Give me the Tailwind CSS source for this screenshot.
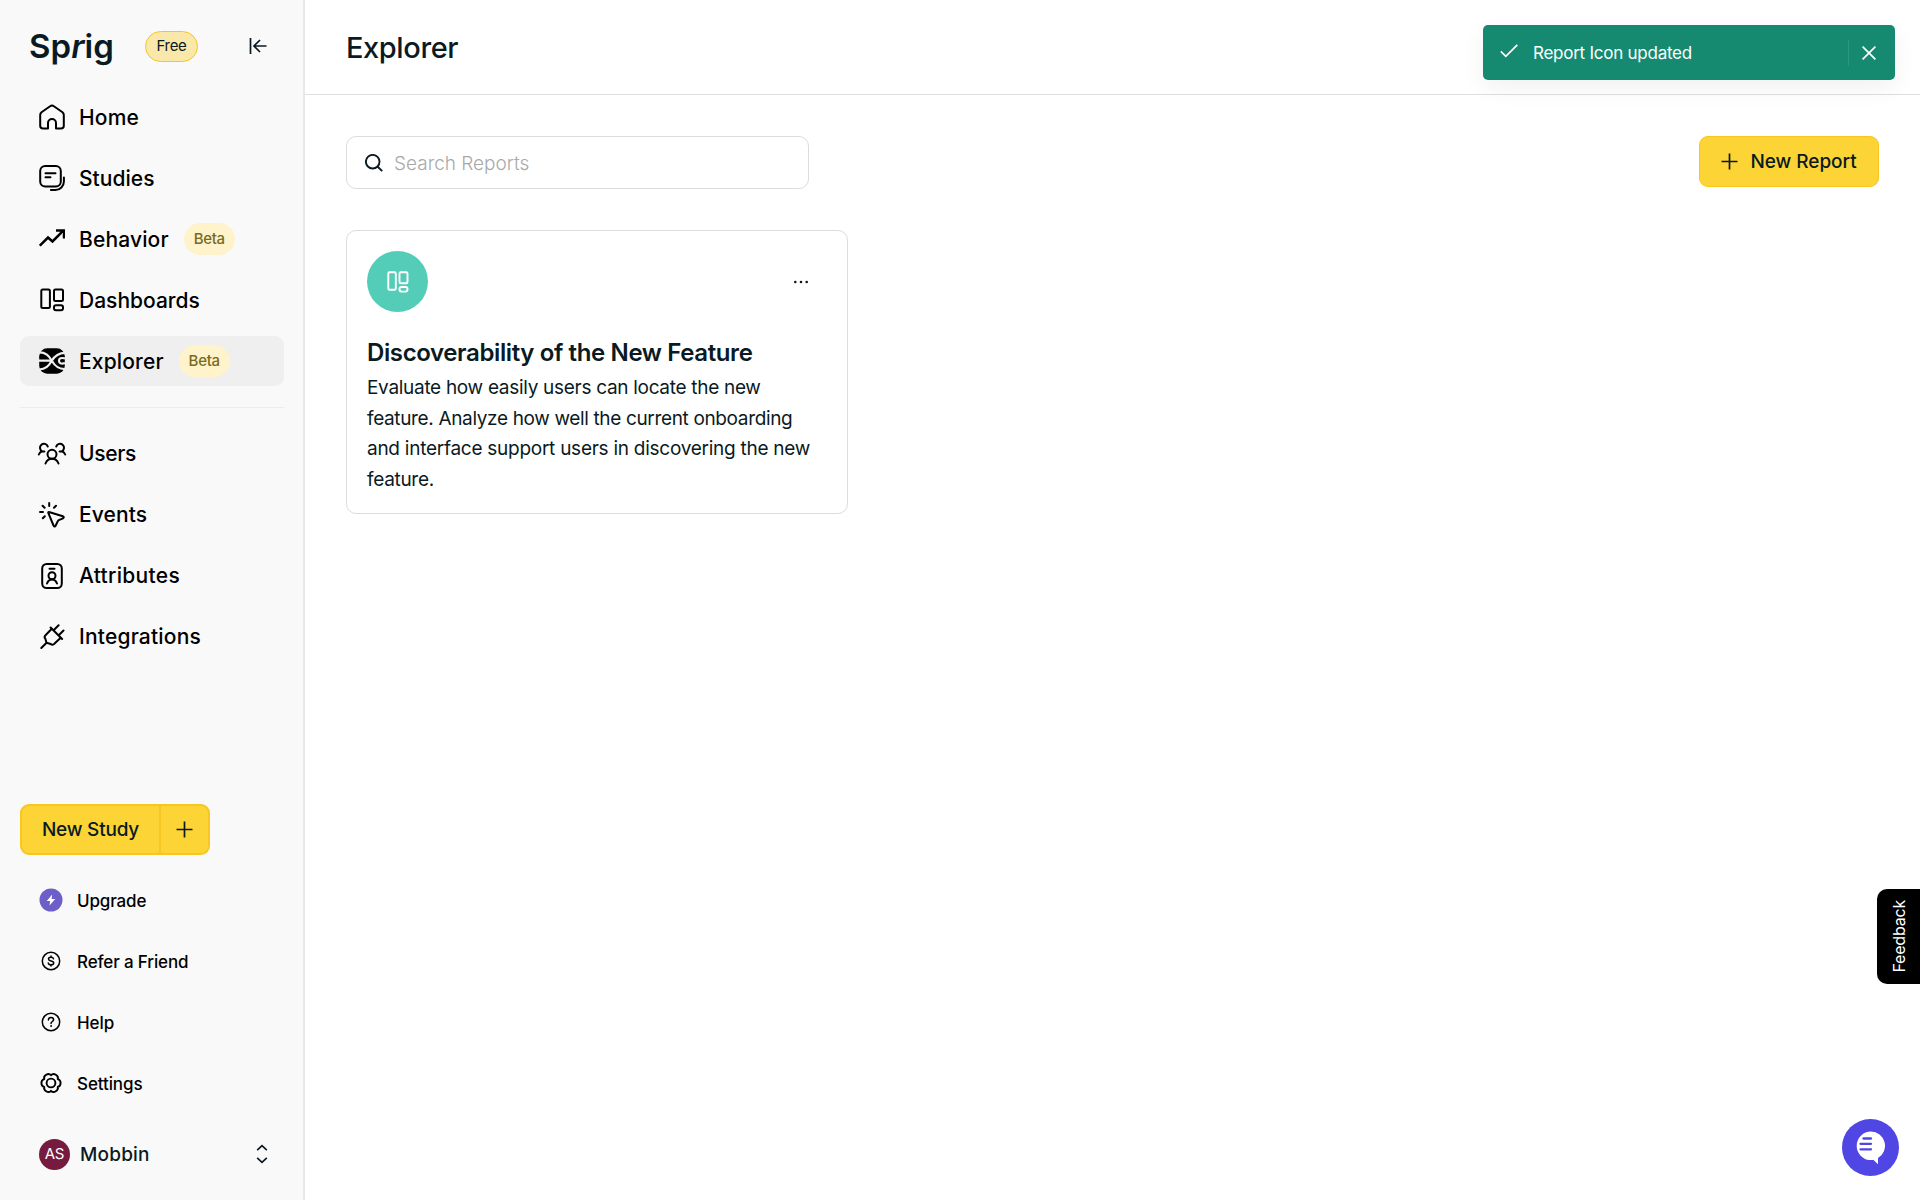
<!DOCTYPE html>
<html lang="en">
<head>
    <meta charset="utf-8">
    <title>Explorer | Sprig</title>
    <script src="https://cdn.jsdelivr.net/npm/@tailwindcss/browser@4"></script>
</head>
<body class="h-screen overflow-hidden bg-white font-['Inter','Liberation_Sans',sans-serif] text-[#0a1a22]">
    <div class="flex h-full">
        <!-- Sidebar -->
        <aside class="flex flex-col w-[305px] h-full shrink-0 bg-[#f9f9f9] border-r-2 border-[#e8e8e8] pl-5 pr-[19px] text-black">
            <div class="flex items-center h-[92px] pl-[9px] pr-[17px] text-[#0a1a22]">
                <h1 class="w-[87px] text-[33px] font-semibold leading-none tracking-[0.1px]">Sp<i>r</i>ig</h1>
                <span class="flex items-center justify-center ml-[29px] w-[53px] h-[31px] pt-px rounded-full border-[1.5px] border-[#f8c623] bg-[#f9e8a9] text-[15px] tracking-[-0.3px]">Free</span>
                <svg class="ml-auto" width="18" height="18" viewBox="0 0 18 18" fill="none" stroke="currentColor" stroke-width="1.7">
                    <path d="M1.5 1v16M17.5 9H5.5M11 3 5 9l6 6"/>
                </svg>
            </div>

            <nav class="flex flex-col gap-[11px] text-[21px] font-medium">
                <a class="flex items-center h-[50px] px-[19px] gap-[14px] rounded-[9px]">
                    <svg width="26" height="26" viewBox="0 0 26 26" fill="none" stroke="currentColor" stroke-width="2" stroke-linejoin="round">
                        <path d="M9 24.5H4a2.8 2.8 0 0 1-2.8-2.8V11c0-1.2.5-2.1 1.3-2.8l8.6-6a3.2 3.2 0 0 1 3.8 0l8.6 6c.8.7 1.3 1.6 1.3 2.8v10.7a2.8 2.8 0 0 1-2.8 2.8h-5V19a4 4 0 0 0-8 0z"/>
                    </svg>
                    <span class="pt-0.5 tracking-[0.2px]">Home</span>
                </a>
                <a class="flex items-center h-[50px] px-[19px] gap-[14px] rounded-[9px]">
                    <svg width="26" height="26" viewBox="0 0 26 26" fill="none" stroke="currentColor" stroke-width="2" stroke-linecap="round">
                        <rect x="1.2" y="1" width="20.6" height="20.4" rx="5"/>
                        <path d="M6.5 8.2h10M6.5 12.2h5M24.9 12.5v4a8.4 8.4 0 0 1-8.4 8.4h-4.6"/>
                    </svg>
                    <span class="pt-0.5 tracking-[0.05px]">Studies</span>
                </a>
                <a class="flex items-center h-[50px] px-[19px] gap-[14px] rounded-[9px]">
                    <svg width="26" height="26" viewBox="0 0 26 26" fill="none" stroke="currentColor" stroke-width="2.5">
                        <path d="M.8 19.7 9 11.5l4.5 4L24.3 4.7M17 4.5h8v8"/>
                    </svg>
                    <span class="pt-0.5 tracking-[0.15px]">Behavior</span>
                    <span class="flex items-center justify-center ml-[1px] w-[51px] h-[32px] pt-px rounded-full bg-[#fef3cb] text-[#7a6a1c] text-[15px] tracking-[-0.3px]">Beta</span>
                </a>
                <a class="flex items-center h-[50px] px-[19px] gap-[14px] rounded-[9px]">
                    <svg width="26" height="26" viewBox="0 0 26 26" fill="none" stroke="currentColor" stroke-width="2">
                        <rect x="2.3" y="2.4" width="8.6" height="18.6" rx="1.5"/>
                        <rect x="15" y="2.4" width="9" height="11.6" rx="1.5"/>
                        <rect x="15" y="18.2" width="9" height="5" rx="2"/>
                    </svg>
                    <span class="pt-0.5 tracking-[0px]">Dashboards</span>
                </a>
                <a class="flex items-center h-[50px] px-[19px] gap-[14px] rounded-[9px] bg-[#efefef]">
                    <svg width="26" height="26" viewBox="0 0 26 26" fill="none">
                        <rect x=".2" y=".3" width="25.6" height="25.4" rx="8" fill="#000"/>
                        <path d="M-1 4.5C7 4 10 8 12.8 12.7S19 21.5 27 21M-1 21.5C7 21.5 10 17.5 12.8 12.7S19.5 4.5 27 4.8M0 12.7h12.500M26 10.500c-4-1.300-6 0-6 2.300s2 3.500 6 2.200" stroke="#efefef" stroke-width="2.2"/>
                    </svg>
                    <span class="pt-0.5 tracking-[0.15px]">Explorer</span>
                    <span class="flex items-center justify-center ml-[1px] w-[51px] h-[32px] pt-px rounded-full bg-[#fef3cb] text-[#7a6a1c] text-[15px] tracking-[-0.3px]">Beta</span>
                </a>
            </nav>

            <hr class="mt-[21px] mb-[21px] border-[#ededed]">

            <nav class="flex flex-col gap-[11px] text-[21px] font-medium">
                <a class="flex items-center h-[50px] px-[19px] gap-[14px]">
                    <svg class="overflow-visible" width="26" height="26" viewBox="0 0 26 26" fill="none" stroke="currentColor" stroke-width="2" stroke-linecap="round">
                        <circle cx="13" cy="13.3" r="4.5"/>
                        <path d="M6.5 22.5c1.2-3 3.5-4.7 6.5-4.7s5.3 1.7 6.5 4.7"/>
                        <path d="M8.8 5.6A4 4 0 1 0 3.2 10.3C1.5 10.8.4 11.8-.2 13.5M3.2 10.3c.8.4 1.4.4 2.2.2M17.2 5.6a4 4 0 1 1 5.6 4.7c1.7.5 2.8 1.5 3.4 3.200M22.800 10.300c-.8.400-1.400.4-2.200.2"/>
                    </svg>
                    <span class="tracking-[-0.3px]">Users</span>
                </a>
                <a class="flex items-center h-[50px] px-[19px] gap-[14px]">
                    <svg width="26" height="26" viewBox="0 0 26 26" fill="none" stroke="currentColor" stroke-width="2" stroke-linecap="round" stroke-linejoin="round">
                        <path d="m10 10 13.8 4.2c1.2.4 1.3 1.6.2 2.1l-4.2 1.8c-.5.2-.8.5-1 1l-2.2 4.6c-.5 1.1-1.7 1-2.1-.2L9.3 10.8c-.2-.6.1-1 .7-.8zM10.2 1v3M3.6 3.8l2 2M17 3.8l-2 2M1 10h3M5.8 14.2l-2 2"/>
                    </svg>
                    <span class="tracking-[0.1px]">Events</span>
                </a>
                <a class="flex items-center h-[50px] px-[19px] gap-[14px]">
                    <svg width="26" height="26" viewBox="0 0 26 26" fill="none" stroke="currentColor" stroke-width="2" stroke-linecap="round">
                        <rect x="3.2" y="1" width="19.6" height="24" rx="4.5"/>
                        <circle cx="13" cy="12.8" r="3.5"/>
                        <path d="M10.5 5.8h5M8 20.5c.9-2.5 2.6-4 5-4s4.1 1.5 5 4"/>
                    </svg>
                    <span class="tracking-[0.3px]">Attributes</span>
                </a>
                <a class="flex items-center h-[50px] px-[19px] gap-[14px]">
                    <svg width="26" height="26" viewBox="0 0 26 26" fill="none" stroke="currentColor" stroke-width="2" stroke-linecap="round" stroke-linejoin="round">
                        <path d="m2.3 24 5-5M11.6 3.5l11.5 11.5M12.8 4.8l-6.3 6.400a2.500 2.500 0 0 0-.2 3.400l1.200 4.200 4.200 1.200a2.500 2.500 0 0 0 3.600-.2l6.400-6M15.400 5.500l4.200-4.200M20.500 10.500l4-4"/>
                    </svg>
                    <span class="tracking-[0.2px]">Integrations</span>
                </a>
            </nav>

            <div class="flex mt-auto w-[190px] h-[51px] shrink-0 rounded-[9px] border-2 border-[#f8c623] bg-[#fcd435] text-[#0a1a22]">
                <button class="w-[139px] pt-0.5 border-r-2 border-[#f8c623] text-[19px] font-medium tracking-[-0.2px]">New Study</button>
                <button class="flex flex-1 items-center justify-center">
                    <svg width="17" height="17" viewBox="0 0 17 17" stroke="currentColor" stroke-width="1.7"><path d="M8.5.5v16M.5 8.5h16"/></svg>
                </button>
            </div>

            <nav class="flex flex-col gap-[11px] mt-5 text-[17px] font-medium">
                <a class="flex items-center h-[50px] px-[19px] gap-[14px]">
                    <svg width="24" height="24" viewBox="0 0 24 24"><circle cx="12" cy="12" r="11.5" fill="#6c5fc7"/><path d="M13.2 6.5 7.7 13h3.5l-.7 4.5L16.2 11h-3.6z" fill="#fff"/></svg>
                    <span class="pt-[3px] tracking-[-0.15px]">Upgrade</span>
                </a>
                <a class="flex items-center h-[50px] px-[19px] gap-[14px]">
                    <svg width="24" height="24" viewBox="0 0 24 24" fill="none" stroke="currentColor" stroke-width="1.5" stroke-linecap="round">
                        <circle cx="12" cy="12" r="8.7"/>
                        <path d="M14.5 9.800c-.2-1-1.200-1.500-2.500-1.500-1.500 0-2.500.6-2.500 1.700 0 2.700 5.200 1.200 5.200 4 0 1.100-1.100 1.800-2.700 1.800-1.500 0-2.500-.6-2.700-1.700M12 7v1.300M12 15.800V17"/>
                    </svg>
                    <span class="pt-[3px] tracking-[-0.15px]">Refer a Friend</span>
                </a>
                <a class="flex items-center h-[50px] px-[19px] gap-[14px]">
                    <svg width="24" height="24" viewBox="0 0 24 24" fill="none" stroke="currentColor" stroke-width="1.5" stroke-linecap="round">
                        <circle cx="12" cy="12" r="8.7"/>
                        <path d="M9.4 10c0-1.6 1.1-2.6 2.6-2.6s2.6 1 2.6 2.3c0 1.7-2.6 1.9-2.6 3.7"/>
                        <circle cx="12" cy="16" r=".5" fill="currentColor" stroke-width=".8"/>
                    </svg>
                    <span class="pt-[3px] tracking-[-0.1px]">Help</span>
                </a>
                <a class="flex items-center h-[50px] px-[19px] gap-[14px]">
                    <svg width="24" height="24" viewBox="0 0 24 24" fill="none" stroke="currentColor" stroke-width="1.9" stroke-linejoin="round">
                        <circle cx="12" cy="12" r="4.4"/>
                        <path d="M12 4.2C14.7 1.4 19.9 4.4 18.75 8.1 22.55 9 22.55 15 18.75 15.9 19.9 19.6 14.7 22.6 12 19.8 9.3 22.6 4.1 19.6 5.25 15.9 1.45 15 1.45 9 5.25 8.1 4.1 4.4 9.3 1.4 12 4.2z"/>
                    </svg>
                    <span class="pt-[3px] tracking-[-0.1px]">Settings</span>
                </a>
            </nav>

            <div class="flex items-center h-[50px] mt-[21px] mb-[21px] pl-[19px] pr-4 text-[#0a1a22]">
                <span class="flex items-center justify-center size-[31px] pt-px rounded-full bg-[#761b3f] text-white text-[15px] tracking-[-0.3px]">AS</span>
                <span class="ml-[10px] pt-[3px] text-[19px] font-medium tracking-[0.2px]">Mobbin</span>
                <svg class="ml-auto" width="12" height="20" viewBox="0 0 12 20" fill="none" stroke="currentColor" stroke-width="1.7"><path d="m1.2 6.2 4.8-4.5 4.8 4.5M1.2 13.8 6 18.3l4.8-4.5"/></svg>
            </div>
        </aside>

        <!-- Main -->
        <main class="flex-1">
            <header class="flex items-center h-[95px] px-[41px] pt-px border-b border-[#dfdfdf]">
                <h2 class="text-[29px] font-medium tracking-[-0.4px]">Explorer</h2>
            </header>
            <div class="px-[41px] pt-[41px]">
                <div class="flex items-start justify-between">
                    <div class="flex items-center w-[463px] h-[53px] pl-[18px] rounded-[10px] border border-[#dcdcdc]">
                        <svg width="18" height="18" viewBox="0 0 18 18" fill="none" stroke="currentColor" stroke-width="1.9"><circle cx="7.7" cy="7.7" r="6.800"/><path d="m12.500 12.500 4.700 4.700"/></svg>
                        <span class="ml-[11px] pt-[3px] text-[19px] font-light text-[#a9a9a9]">Search Reports</span>
                    </div>
                    <button class="flex items-center justify-center gap-3 w-[180px] h-[51px] rounded-[9px] border border-[#f8c623] bg-[#fcd435] text-[19px] font-medium tracking-[-0.05px]">
                        <svg width="17" height="17" viewBox="0 0 17 17" stroke="currentColor" stroke-width="1.7"><path d="M8.5.5v16M.5 8.5h16"/></svg>
                        <span class="pt-0.5">New Report</span>
                    </button>
                </div>

                <!-- Report card -->
                <div class="mt-[41px] w-[502px] h-[284px] px-5 pt-5 rounded-[10px] border border-[#dcdcdc]">
                    <div class="flex items-center justify-between pr-[18px]">
                        <div class="flex items-center justify-center size-[61px] rounded-full bg-[#54cdb8] text-white">
                            <svg width="26" height="26" viewBox="0 0 26 26" fill="none" stroke="currentColor" stroke-width="1.9">
                                <rect x="3.3" y="3.3" width="7.5" height="17.5" rx="1.3"/>
                                <rect x="14.5" y="3.3" width="8" height="11" rx="1.3"/>
                                <rect x="14.5" y="18" width="8" height="4.6" rx="2"/>
                            </svg>
                        </div>
                        <svg width="16" height="4" viewBox="0 0 16 4" fill="currentColor"><circle cx="2.3" cy="2" r="1.3"/><circle cx="8" cy="2" r="1.3"/><circle cx="13.7" cy="2" r="1.3"/></svg>
                    </div>
                    <h3 class="mt-[25px] text-[24px] leading-[31px] font-semibold tracking-[-0.38px] whitespace-nowrap">Discoverability of the New Feature</h3>
                    <p class="mt-[5px] text-[19px] leading-[30.5px] tracking-[-0.3px] whitespace-nowrap">Evaluate how easily users can locate the new<br><span class="tracking-[-0.35px]">feature. Analyze how well the current onboarding</span><br><span class="tracking-[-0.26px]">and interface support users in discovering the new</span><br>feature.</p>
                </div>
            </div>
        </main>
    </div>

    <!-- Toast -->
    <div class="absolute top-[25px] right-[25px] flex items-center w-[412px] h-[55px] pl-[17px] pr-[19px] rounded-[5px] bg-[#158a71] text-white shadow-[0_8px_24px_rgba(0,0,0,0.06)]">
        <svg class="mb-1" width="18" height="14" viewBox="0 0 18 14" fill="none" stroke="currentColor" stroke-width="1.7"><path d="m.8 7.3 5 5L17.3.8"/></svg>
        <span class="ml-[15px] pt-0.5 text-[17px] tracking-[-0.25px]">Report Icon updated</span>
        <span class="ml-auto h-[26px] w-px bg-[#2a977f]"></span>
        <svg class="ml-[13px]" width="14" height="14" viewBox="0 0 14 14" stroke="currentColor" stroke-width="1.7"><path d="m.6.6 12.8 12.8M13.4.6.6 13.4"/></svg>
    </div>

    <div class="absolute right-0 top-[889px] flex items-center justify-center w-[43px] h-[95px] pl-px rounded-l-[10px] bg-black">
        <span class="[writing-mode:vertical-rl] rotate-180 text-[16px] tracking-[-0.2px] text-white">Feedback</span>
    </div>

    <!-- Chat launcher -->
    <button class="absolute right-[21px] top-[1119px] flex items-center justify-center size-[57px] rounded-full bg-[#5046e4]">
        <svg width="30" height="34" viewBox="0 0 30 34"><path d="M15 .5a14.3 14.3 0 1 0 0 28.6c1 0 1.8-.1 2.6-.2l4.4 4.3v-6.1A14.3 14.3 0 0 0 15 .5z" fill="#fff"/><path d="M7.5 7.5h7.5M4.5 12.8H15M4.5 18.3H15" stroke="#5046e4" stroke-width="2.3" stroke-linecap="round"/></svg>
    </button>
</body>
</html>
